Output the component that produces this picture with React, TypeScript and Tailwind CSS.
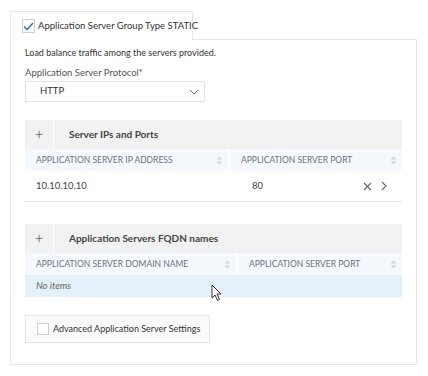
import React from 'react';

const SortIcon = () => (
  <svg width="7" height="9" viewBox="0 0 7 9" className="shrink-0">
    <path d="M3.5 0.5 L6.5 3.5 H0.5 Z" fill="#d4d7dc" />
    <path d="M3.5 8.5 L6.5 5.5 H0.5 Z" fill="#d4d7dc" />
  </svg>
);

const Cursor = () => (
  <svg width="12" height="18" viewBox="0 0 12 18" className="absolute left-[211px] top-[284px]">
    <path d="M1 1 V14 L4 11 L6.5 16.5 L8.5 15.5 L6 10 H10 Z" fill="#fff" stroke="#333" strokeWidth="1" strokeLinejoin="round" />
  </svg>
);

interface Col {
  label: string;
  width: string;
}

const GridTable: React.FC<{ title: string; cols: Col[]; children: React.ReactNode }> = ({ title, cols, children }) => (
  <div className="w-[377px]">
    <div className="flex h-[29px] bg-[#f2f2f2]">
      <div className="flex w-[29px] items-center justify-center border-r border-white text-[15px] font-light text-[#333]">+</div>
      <div className="flex items-center whitespace-nowrap pl-[15px] text-[10px] font-bold text-[#444]">{title}</div>
    </div>
    <div className="flex h-[22px] bg-[#f5f8fc]">
      {cols.map((c, i) => (
        <div
          key={c.label}
          className={`flex items-center justify-between pr-[5px] ${c.width} ${i === 0 ? 'border-r-2 border-white pl-[11px]' : 'flex-1 pl-[11px]'}`}
        >
          <span className="whitespace-nowrap text-[8.5px] uppercase text-[#6b7480]">{c.label}</span>
          <SortIcon />
        </div>
      ))}
    </div>
    {children}
  </div>
);

export default function App() {
  return (
    <div className="relative h-[376px] w-[428px] bg-white pl-[10px] pt-[11px] font-['Lato',sans-serif] text-[#333]">
      <div className="relative z-10 -mb-px flex h-[29px] w-[183px] items-center gap-[3px] border border-b-0 border-[#e6e6e6] bg-white pl-[11px]">
        <span className="flex h-[14px] w-[14px] items-center justify-center border border-[#cfcfcf] bg-white">
          <svg width="11" height="9" viewBox="0 0 11 9">
            <path d="M1 4.5 L4 7.5 L10 1" fill="none" stroke="#1f6fb5" strokeWidth="1.3" />
          </svg>
        </span>
        <span className="whitespace-nowrap text-[9.5px] text-[#333]">Application Server Group Type STATIC</span>
      </div>

      <div className="flex h-[326px] w-[407px] flex-col border border-[#e6e6e6] pl-[14px] pt-[6px]">
        <p className="whitespace-nowrap text-[9px] leading-[14px] text-[#333]">Load balance traffic among the servers provided.</p>
        <p className="mt-[6px] whitespace-nowrap text-[9.5px] leading-[14px] text-[#555]">Application Server Protocol*</p>
        <div className="mt-[1px] flex h-[21px] w-[180px] items-center justify-between border border-[#e3e3e3] pl-[14px] pr-[5px]">
          <span className="text-[9.5px] text-[#333]">HTTP</span>
          <svg width="10" height="6" viewBox="0 0 10 6">
            <path d="M1 1 L5 5 L9 1" fill="none" stroke="#666" strokeWidth="1" />
          </svg>
        </div>

        <div className="mt-[18px]">
          <GridTable
            title="Server IPs and Ports"
            cols={[
              { label: 'Application Server IP Address', width: 'w-[205px]' },
              { label: 'Application Server Port', width: '' },
            ]}
          >
            <div className="flex h-[31px] items-center border-b border-[#e6e6e6] text-[9.5px] text-[#444]">
              <div className="w-[205px] pl-[11px]">10.10.10.10</div>
              <div className="flex flex-1 items-center justify-between pl-[22px] pr-[15px]">
                <span>80</span>
                <span className="flex items-center gap-[9px]">
                  <svg width="9" height="9" viewBox="0 0 9 9">
                    <path d="M1 1 L8 8 M8 1 L1 8" stroke="#666" strokeWidth="1.1" />
                  </svg>
                  <svg width="6" height="10" viewBox="0 0 6 10">
                    <path d="M1 1 L5 5 L1 9" fill="none" stroke="#666" strokeWidth="1.1" />
                  </svg>
                </span>
              </div>
            </div>
          </GridTable>
        </div>

        <div className="mt-[22px]">
          <GridTable
            title="Application Servers FQDN names"
            cols={[
              { label: 'Application Server Domain Name', width: 'w-[213px]' },
              { label: 'Application Server Port', width: '' },
            ]}
          >
            <div className="flex h-[22px] items-center bg-[#e5f1fa] pl-[11px] text-[9.5px] italic text-[#666]">No items</div>
          </GridTable>
        </div>

        <div className="mt-[18px] flex h-[28px] w-[185px] items-center gap-[4px] border border-[#e6e6e6] bg-[#fbfbfb] pl-[11px]">
          <span className="h-[12px] w-[12px] shrink-0 border border-[#cfcfcf] bg-white" />
          <span className="whitespace-nowrap text-[9px] text-[#333]">Advanced Application Server Settings</span>
        </div>
      </div>
      <Cursor />
    </div>
  );
}
